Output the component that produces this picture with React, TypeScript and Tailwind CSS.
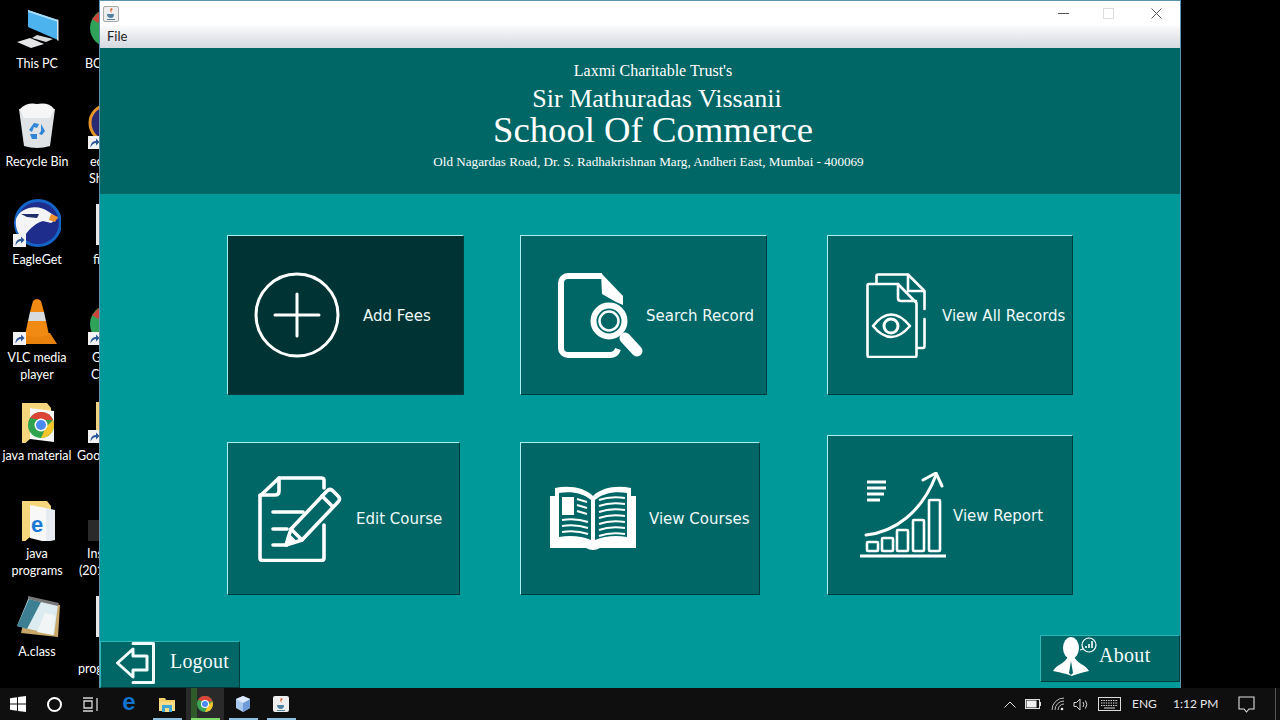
import React from 'react';

const W = 'white';
const TEAL = '#006666';

function Shortcut() {
  return (
    <svg viewBox="0 0 13 13" className="absolute left-0 bottom-0 w-[13px] h-[13px]">
      <rect width="13" height="13" fill="#f2f2f2" />
      <path d="M2.5 11.5 C2.5 7 5 5 8 5 V2.5 L11.5 6 L8 9.5 V7 C6 7 4.5 8 2.5 11.5Z" fill="#2b5797" />
    </svg>
  );
}

function ThisPc() {
  return (
    <svg viewBox="0 0 48 48" className="w-[48px] h-[48px]">
      <path d="M15 7 L45 17 V37 L15 24Z" fill="#4db3ee" />
      <path d="M15 7 L45 17 V19 L15 9Z" fill="#a8def8" />
      <path d="M44 16.5 L45.5 17 V38 L44 37Z" fill="#dde6ec" />
      <path d="M24 32 L40 36 L33 39 L19 35Z" fill="#d8dcdf" />
      <path d="M4 39 L17 35 L31 41 L18 45Z" fill="#e4e6e8" />
    </svg>
  );
}

function RecycleBin() {
  return (
    <svg viewBox="0 0 48 48" className="w-[48px] h-[48px]">
      <path d="M6 8 L42 8 L37 45 Q24 49 11 45Z" fill="#dfe3e6" />
      <path d="M7 8 Q14 1 24 3 Q36 1 41 8 L37 17 H11Z" fill="#f6f6f6" />
      <path d="M16 29 L21 22 L26 23 L24 27 L21 26 L19 31Z M28 23 L32 30 L29 34 L26 33 L28 30Z M17 33 L24 33 L24 38 L19 38Z" fill="#2f86d6" />
    </svg>
  );
}

function EagleGet() {
  return (
    <div className="relative w-[48px] h-[48px]">
      <svg viewBox="0 0 48 48" className="w-[48px] h-[48px]">
        <circle cx="25" cy="24" r="24" fill="#1464c8" />
        <circle cx="25" cy="24" r="21" fill="#1e2c8c" />
        <path d="M3 20 C8 7 26 5 36 13 L45 19 L38 24 L30 22 C22 24 14 32 10 40 C4 34 2 27 3 20Z" fill="#f4f4f6" />
        <path d="M38 15 L45 18 L42 23 L36 21Z" fill="#f0922b" />
        <path d="M8 15 L26 15 L24 19 L14 18Z" fill="#1e2c6c" />
      </svg>
      <Shortcut />
    </div>
  );
}

function Vlc() {
  return (
    <div className="relative w-[48px] h-[48px]">
      <svg viewBox="0 0 48 48" className="w-[48px] h-[48px]">
        <path d="M6 47 L11 36 H37 L44 47Z" fill="#e8820c" />
        <path d="M20 4 Q24 0 28 4 L31 15 H17Z" fill="#f08a12" />
        <path d="M17 15 H31 L33 24 H15Z" fill="#d8dbde" />
        <path d="M15 24 H33 L36 38 Q24 42 12 38Z" fill="#f08a12" />
      </svg>
      <Shortcut />
    </div>
  );
}

function ChromeFolder() {
  return (
    <svg viewBox="0 -7 48 48" className="w-[48px] h-[48px]">
      <path d="M9 1 H34 L38 6 V37 L17 37 L9 44Z" fill="#f6d67c" />
      <path d="M17 6 L41 9 V40 L17 37Z" fill="#f8f8f8" />
      <circle cx="28" cy="23" r="13" fill="#2fa34f" />
      <path d="M17 16 A13 13 0 0 1 40 18 H28Z" fill="#dc4437" />
      <path d="M40 18 A13 13 0 0 1 28 36 L33 25Z" fill="#f7c52c" />
      <circle cx="28" cy="23" r="6.5" fill="white" />
      <circle cx="28" cy="23" r="5" fill="#4a8af0" />
    </svg>
  );
}

function IeFolder() {
  return (
    <svg viewBox="0 -7 48 48" className="w-[48px] h-[48px]">
      <path d="M9 1 H34 L38 6 V37 L17 37 L9 44Z" fill="#f6d67c" />
      <path d="M17 5 L33 8 V42 L17 38Z" fill="#f8f8f8" />
      <path d="M33 8 L42 10 V40 L33 42Z" fill="#e6ecf2" />
      <text x="18" y="32" fontSize="22" fontWeight="700" fill="#1a78d4" fontFamily="'Liberation Sans', sans-serif">e</text>
    </svg>
  );
}

function Notepad() {
  return (
    <svg viewBox="0 -4 48 48" className="w-[48px] h-[48px]">
      <path d="M16 2 L47 10 L45 42 L8 38Z" fill="#c8a86a" />
      <path d="M16 2 L45 9 L41 40 L4 31Z" fill="#dcecf0" />
      <path d="M16 4 L28 7 L14 34 L4 31Z" fill="#3d7f92" />
      <path d="M32 18 L42 20 L40 40 L24 37Z" fill="#f2f5f6" />
      <path d="M15 1 L46 8 L45 11 L15 4Z" fill="#777" />
    </svg>
  );
}

function DesktopItem({ icon, lines }: { icon: React.ReactNode; lines: string[] }) {
  return (
    <div className="h-[98px] flex flex-col items-center">
      {icon}
      <div className="mt-[4px] text-center text-[12.5px] leading-[17px] text-white whitespace-nowrap">
        {lines.map((l) => <div key={l}>{l}</div>)}
      </div>
    </div>
  );
}

// second desktop column, almost fully hidden behind the app window
function PeekItem({ art, labels }: { art: React.ReactNode; labels: [string, string][] }) {
  return (
    <div className="h-[98px] flex flex-col">
      <div className="relative w-[48px] h-[48px] ml-[12px]">{art}</div>
      <div className="mt-[4px] text-[12.5px] leading-[17px] text-white whitespace-nowrap">
        {labels.map(([text, cls]) => <div key={text} className={cls}>{text || '\u00a0'}</div>)}
      </div>
    </div>
  );
}

function PeekSvg({ children }: { children: React.ReactNode }) {
  return <svg viewBox="0 0 48 48" className="w-[48px] h-[48px]">{children}</svg>;
}

function Card({ icon, label, className, gap }: { icon: React.ReactNode; label: string; className: string; gap: string }) {
  return (
    <div className={`flex items-center border-t border-l border-t-[#a9f0f0] border-l-[#a9f0f0] border-b border-r border-b-[#003c3c] border-r-[#003c3c] text-[15px] text-[#eef9f9] whitespace-nowrap ${className}`}>
      {icon}
      <span className={`pt-[2px] ${gap}`}>{label}</span>
    </div>
  );
}

function PlusIcon() {
  return (
    <svg viewBox="0 0 86 86" className="w-[86px] h-[86px] shrink-0" fill="none" stroke={W} strokeLinecap="round">
      <circle cx="43" cy="43" r="41" strokeWidth="3" />
      <path d="M43 22 V64 M21 43 H65" strokeWidth="3" />
    </svg>
  );
}

function SearchDocIcon() {
  return (
    <svg viewBox="0 0 86 85" className="w-[86px] h-[85px] shrink-0" fill="none" stroke={W}>
      <path d="M44 3 H10 A7 7 0 0 0 3 10 V75 A7 7 0 0 0 10 82 H52 Q58 82 60 76" strokeWidth="6" />
      <path d="M43 0 L65 23 V32 L58 29 L44 21Z" fill={W} stroke="none" />
      <circle cx="51" cy="48" r="15.5" strokeWidth="6" fill={TEAL} />
      <circle cx="51" cy="48" r="9.5" strokeWidth="2.5" />
      <path d="M67 65 L79 78" strokeWidth="11" strokeLinecap="round" />
    </svg>
  );
}

function EyeDocsIcon() {
  return (
    <svg viewBox="0 0 60 85" className="w-[60px] h-[85px] shrink-0" fill="none" stroke={W} strokeWidth="2.6" strokeLinejoin="round" strokeLinecap="round">
      <path d="M10.5 10 V3 Q10.5 1.5 12 1.5 H42 L58.5 18 V36 M58.5 46 V73 Q58.5 75 57 75 H51" />
      <path d="M42 2 V18 H58" />
      <path d="M3 11 H32 L50.5 30 V82 Q50.5 84 49 84 H3 Q1.5 84 1.5 82 V12.5 Q1.5 11 3 11Z" />
      <path d="M32 11 V25 Q32 28 35 28 H50" />
      <path d="M7 53 Q25 30 44 53 Q25 75 7 53Z" />
      <circle cx="25" cy="53" r="7" strokeWidth="3" />
    </svg>
  );
}

function EditDocIcon() {
  return (
    <svg viewBox="0 0 84 86" className="w-[84px] h-[86px] shrink-0" fill="none" stroke={W} strokeWidth="3.6" strokeLinecap="round" strokeLinejoin="round">
      <path d="M66 12 V4 Q66 2 63 2 H21 L2 20 V82 Q2 84.5 5 84.5 H63 Q66 84.5 66 82 V49" />
      <path d="M21 2 V15 Q21 19 17 19 H2" />
      <path d="M15 36 H45 M15 53 H29 M15 69 H29" />
      <path d="M28 69 L33 53 L69 15 Q72 12 75 15 L80 20 Q83 23 80 26 L44 64Z" fill={TEAL} />
      <path d="M64 20 L75 31 M33 53 L44 64" />
      <path d="M29 68 L31 60 L37 66Z" fill={W} />
    </svg>
  );
}

function BookIcon() {
  const left = [34, 40, 46];
  const right = [12, 18, 24, 30, 36, 42, 48];
  return (
    <svg viewBox="0 0 86 65" className="w-[86px] h-[65px] shrink-0" fill="none">
      <path d="M5 2 C20 -1 35 2 43 10 C51 2 66 -1 81 2 V10 H86 V62 H50 Q43 66 36 62 H0 V10 H5Z" fill={W} />
      <path d="M9 7 C21 5 33 7 41 14 V54 C32 50 20 49 9 51Z" fill={TEAL} />
      <path d="M77 7 C65 5 53 7 45 14 V54 C54 50 66 49 77 51Z" fill={TEAL} />
      <rect x="12" y="11" width="12" height="18" fill={W} />
      <path d="M27 13 L37 16 M27 19 L37 22 M27 25 L37 28" stroke={W} strokeWidth="2" />
      {left.map((y) => <path key={y} d={`M12 ${y} Q26 ${y - 2} 38 ${y + 2}`} stroke={W} strokeWidth="2" />)}
      {right.map((y) => <path key={y} d={`M49 ${y + 2} Q60 ${y - 2} 75 ${y}`} stroke={W} strokeWidth="2" />)}
      <path d="M43 12 V40" stroke={W} strokeWidth="3" />
      <path d="M43 40 V60" stroke={W} strokeWidth="1" />
    </svg>
  );
}

function ReportIcon() {
  const bars = [[7, 70, 11, 9], [22, 66, 11, 13], [37, 58, 11, 21], [53, 48, 11, 31], [69, 28, 11, 51]];
  return (
    <svg viewBox="0 0 86 86" className="w-[86px] h-[86px] shrink-0" fill="none" stroke={W} strokeWidth="2.6">
      <path d="M0 84 H86" strokeWidth="3" />
      {bars.map(([x, y, w, h]) => <rect key={x} x={x} y={y} width={w} height={h} rx="1" />)}
      <path d="M6 63 C35 60 62 40 76 3" strokeWidth="3" strokeLinecap="round" />
      <path d="M63 8 L76 1 L82 14" strokeWidth="3" strokeLinecap="round" />
      <path d="M7 10 H26 M7 16 H26 M7 22 H24 M7 28 H20" strokeWidth="3" />
    </svg>
  );
}

function LogoutIcon() {
  return (
    <svg viewBox="0 0 40 42" className="w-[40px] h-[42px] shrink-0" fill="none" stroke="#f2fbfb" strokeWidth="3" strokeLinejoin="round" strokeLinecap="round">
      <path d="M17 1.5 H37.5 V40.5 H17" />
      <path d="M1.5 21 L17 7 V14 H31 V28 H17 V35Z" />
    </svg>
  );
}

function AboutIcon() {
  return (
    <svg viewBox="0 0 48 40" className="w-[48px] h-[40px] shrink-0">
      <ellipse cx="18" cy="11" rx="8" ry="11" fill={W} />
      <path d="M0 34 C4 27 12 27 15 19 H21 C24 27 32 27 36 34 C30 35 24 37 19 39 C14 37 6 35 0 34Z" fill={W} />
      <path d="M18 24 L16 36 L18 38 L20 36Z" fill={TEAL} />
      <circle cx="36" cy="8" r="7" fill={TEAL} stroke={W} strokeWidth="1.2" />
      <path d="M27 13 L30 12" stroke={W} strokeWidth="1.2" />
      <path d="M33 11 V9 M36 11 V7 M39 11 V4" stroke={W} strokeWidth="1.6" />
    </svg>
  );
}

function TaskSlot({ children, className = 'w-[38px]' }: { children: React.ReactNode; className?: string }) {
  return <div className={`relative h-full flex items-center justify-center ${className}`}>{children}</div>;
}

function Taskbar() {
  return (
    <div className="absolute left-0 bottom-0 w-[1280px] h-[32px] bg-[#0f0f0f] flex items-center text-[#e6e6e6] text-[12px]">
      <TaskSlot className="w-[36px]">
        <svg viewBox="0 0 16 16" className="w-[16px] h-[16px]" fill="white">
          <path d="M0 2.3 L7 1.3 V7.6 H0Z M8 1.1 L16 0 V7.6 H8Z M0 8.4 H7 V14.7 L0 13.7Z M8 8.4 H16 V16 L8 14.9Z" />
        </svg>
      </TaskSlot>
      <TaskSlot className="w-[36px]">
        <div className="w-[15px] h-[15px] rounded-full border-2 border-white" />
      </TaskSlot>
      <TaskSlot className="w-[36px]">
        <svg viewBox="0 0 17 15" className="w-[17px] h-[15px]" fill="none" stroke="#d8d8d8" strokeWidth="1.3">
          <path d="M1 1 H11 M1 14 H11 M2 4 H10 V11 H2Z M15 1 V14" />
        </svg>
      </TaskSlot>
      <TaskSlot className="w-[38px] ml-[2px]">
        <span className="text-[24px] leading-none font-bold text-[#1272d0] font-['Liberation_Sans',sans-serif] -mt-[4px]">e</span>
      </TaskSlot>
      <TaskSlot>
        <svg viewBox="0 0 16 15" className="w-[16px] h-[15px]">
          <path d="M0 1 H6 L7 3 H16 V14 H0Z" fill="#f4cf6a" />
          <path d="M0 5 H16 V14 H0Z" fill="#f8dc88" />
          <rect x="3" y="8" width="10" height="7" fill="#3fa7d8" />
          <rect x="6" y="11" width="4" height="4" fill="#f8dc88" />
        </svg>
        <div className="absolute left-[5px] right-[4px] bottom-0 h-[2px] bg-[#8fc0e0]" />
      </TaskSlot>
      <TaskSlot className="w-[38px] bg-[#2a2a2a]">
        <div className="absolute left-[5px] top-0 bottom-0 w-[6px] bg-[#2f5a2a]" />
        <svg viewBox="0 0 16 16" className="relative w-[16px] h-[16px]">
          <circle cx="8" cy="8" r="8" fill="#3aa655" />
          <path d="M1 4 A8 8 0 0 1 15.5 5.5 H8Z" fill="#dc4437" />
          <path d="M15.5 5.5 A8 8 0 0 1 8 16 L11 9Z" fill="#f7c52c" />
          <circle cx="8" cy="8" r="4" fill="white" />
          <circle cx="8" cy="8" r="3" fill="#4a8af0" />
        </svg>
        <div className="absolute left-[5px] right-[4px] bottom-0 h-[2px] bg-[#7fdc6a]" />
      </TaskSlot>
      <TaskSlot>
        <svg viewBox="0 0 16 16" className="w-[16px] h-[16px]">
          <path d="M8 0 L15 3 V12 L8 16 L1 12 V3Z" fill="#a9c8ee" />
          <path d="M8 7 L15 3 V12 L8 16Z" fill="#6f9bd8" />
          <path d="M1 3 L8 0 L15 3 L8 7Z" fill="#dbe9fa" />
        </svg>
        <div className="absolute left-[5px] right-[4px] bottom-0 h-[2px] bg-[#8fc0e0]" />
      </TaskSlot>
      <TaskSlot>
        <svg viewBox="0 0 16 16" className="w-[16px] h-[16px]">
          <rect width="16" height="16" rx="2" fill="#eeeeee" />
          <path d="M8 2 Q6 5 9 7 Q7 5 10 3Z" fill="#d9622b" />
          <path d="M4 9 H11 Q11 13 8 13 Q4 13 4 9Z M4 14 H12 V15 H4Z" fill="#5382a1" />
        </svg>
        <div className="absolute left-[5px] right-[4px] bottom-0 h-[2px] bg-[#8fc0e0]" />
      </TaskSlot>

      <div className="ml-auto flex items-center h-full">
        <svg viewBox="0 0 12 7" className="w-[12px] h-[7px] mr-[9px]" fill="none" stroke="#e0e0e0" strokeWidth="1">
          <path d="M0.5 6.5 L6 1 L11.5 6.5" />
        </svg>
        <svg viewBox="0 0 16 10" className="w-[16px] h-[10px] mr-[10px]">
          <rect x="0.5" y="0.5" width="14" height="9" fill="none" stroke="#ddd" />
          <rect x="1.5" y="1.5" width="10" height="7" fill="#eee" />
          <rect x="15" y="3" width="1" height="4" fill="#ddd" />
        </svg>
        <svg viewBox="0 0 14 14" className="w-[14px] h-[14px] mr-[8px]" fill="none" stroke="#bdbdbd">
          <path d="M1 13 A12 12 0 0 1 13 1 M4 13 A9 9 0 0 1 13 4 M7 13 A6 6 0 0 1 13 7" />
          <circle cx="11" cy="12" r="1.3" fill="#eee" stroke="none" />
        </svg>
        <svg viewBox="0 0 16 13" className="w-[16px] h-[13px] mr-[9px]" fill="none" stroke="#d8d8d8">
          <path d="M1 4.5 H3.5 L7 1 V12 L3.5 8.5 H1Z M10 4 Q11.5 6.5 10 9 M12.5 2.5 Q15 6.5 12.5 10.5" />
        </svg>
        <svg viewBox="0 0 23 14" className="w-[23px] h-[14px] mr-[11px]" fill="none" stroke="#dcdcdc">
          <rect x="0.5" y="0.5" width="22" height="13" />
          <path d="M3 3.5 H20 M3 6 H20 M3 8.5 H20" strokeDasharray="1.4 1" />
          <path d="M6 11 H17" />
        </svg>
        <span className="w-[22px] mr-[19px]">ENG</span>
        <span className="w-[42px] mr-[23px] whitespace-nowrap">1:12 PM</span>
        <svg viewBox="0 0 17 17" className="w-[17px] h-[17px] mr-[20px]" fill="none" stroke="#e0e0e0" strokeWidth="1.1">
          <path d="M1 1 H16 V13 H11 L8.5 16 L6 13 H1Z" />
        </svg>
        <div className="w-[1px] h-full bg-[#555] mr-[4px]" />
      </div>
    </div>
  );
}

export default function App() {
  return (
    <div className="relative w-[1280px] h-[720px] overflow-hidden bg-black font-['Lato',sans-serif]">
      {/* desktop icons */}
      <div className="absolute left-0 top-[3px] w-[74px] flex flex-col">
        <DesktopItem icon={<ThisPc />} lines={['This PC']} />
        <DesktopItem icon={<RecycleBin />} lines={['Recycle Bin']} />
        <DesktopItem icon={<EagleGet />} lines={['EagleGet']} />
        <DesktopItem icon={<Vlc />} lines={['VLC media', 'player']} />
        <DesktopItem icon={<ChromeFolder />} lines={['java material']} />
        <DesktopItem icon={<IeFolder />} lines={['java', 'programs']} />
        <DesktopItem icon={<Notepad />} lines={['A.class']} />
      </div>
      <div className="absolute left-[76px] top-[3px] w-[30px] flex flex-col">
        <PeekItem
          labels={[['BC', 'pl-[9px]']]}
          art={<PeekSvg><circle cx="21" cy="25" r="19" fill="#2fa35a" /><path d="M4 16 L12 8 L16 10 L10 20Z" fill="#c8473c" /></PeekSvg>}
        />
        <PeekItem
          labels={[['ed', 'pl-[14px]'], ['Sh', 'pl-[13px]']]}
          art={<><PeekSvg><circle cx="20" cy="22" r="18" fill="#2a2a72" stroke="#e8962a" strokeWidth="3" /></PeekSvg><Shortcut /></>}
        />
        <PeekItem
          labels={[['fi', 'pl-[17px]']]}
          art={<PeekSvg><rect x="8" y="5" width="4" height="41" fill="#e8e8e8" /></PeekSvg>}
        />
        <PeekItem
          labels={[['G', 'pl-[16px]'], ['C', 'pl-[15px]']]}
          art={<><PeekSvg><circle cx="21" cy="27" r="19" fill="#2fa35a" /><path d="M4 18 L12 10 L16 12 L10 22Z" fill="#c8473c" /></PeekSvg><Shortcut /></>}
        />
        <PeekItem
          labels={[['Goo', 'pl-[1px]']]}
          art={<><PeekSvg><rect x="8" y="7" width="4" height="30" fill="#f0d280" /></PeekSvg><Shortcut /></>}
        />
        <PeekItem
          labels={[['Ins', 'pl-[11px]'], ['(201', 'pl-[3px]']]}
          art={<PeekSvg><rect y="27" width="12" height="22" fill="#2a2a2a" /></PeekSvg>}
        />
        <PeekItem
          labels={[['', ''], ['prog', 'pl-[2px]']]}
          art={<PeekSvg><rect x="8" y="5" width="4" height="41" fill="#e8e8e8" /></PeekSvg>}
        />
      </div>

      {/* app window */}
      <div className="absolute left-[99px] top-0 w-[1082px] h-[688px] flex flex-col border border-[#5e93ad] border-b-0">
        <div className="h-[25px] bg-white flex items-center shrink-0">
          <div className="ml-[3px] w-[16px] h-[16px] rounded-[2px] border border-[#a8a8a8] bg-[#eeeeee] flex items-center justify-center">
            <svg viewBox="0 0 12 12" className="w-[12px] h-[12px]">
              <path d="M6 0 Q4 3 7 5 Q5 3 8 1Z" fill="#d9622b" />
              <path d="M2 6 H9 Q9 10 6 10 Q2 10 2 6Z M2 11 H10 V12 H2Z" fill="#5382a1" />
            </svg>
          </div>
          <div className="ml-auto flex items-center">
            <svg viewBox="0 0 11 1" className="w-[11px] h-[1px] mr-[34px]"><rect width="11" height="1" fill="#555" /></svg>
            <svg viewBox="0 0 11 11" className="w-[11px] h-[11px] mr-[37px]" fill="none" stroke="#dddddd"><rect x="0.5" y="0.5" width="10" height="10" /></svg>
            <svg viewBox="0 0 11 11" className="w-[11px] h-[11px] mr-[18px]" fill="none" stroke="#555"><path d="M0.5 0.5 L10.5 10.5 M10.5 0.5 L0.5 10.5" /></svg>
          </div>
        </div>
        <div className="h-[22px] bg-gradient-to-b from-[#fafafa] to-[#d4d8e0] flex items-center pl-[7px] text-[13px] text-[#222] shrink-0">
          File
        </div>

        <div className="h-[146px] bg-[#006666] shrink-0 flex flex-col items-center pl-[26px] pt-[13px] text-white font-['Liberation_Serif',serif]">
          <div className="text-[16px] leading-[20px]">Laxmi Charitable Trust's</div>
          <div className="text-[26px] leading-[30px] mt-[3px] ml-[8px]">Sir Mathuradas Vissanii</div>
          <div className="text-[36.7px] leading-[36px] mt-[-2px]">School Of Commerce</div>
          <div className="text-[13.15px] leading-[16px] mt-[6px] mr-[9px]">Old Nagardas Road, Dr. S. Radhakrishnan Marg, Andheri East, Mumbai - 400069</div>
        </div>

        <div className="flex-1 bg-[#009999] flex flex-col pt-[41px] font-['DejaVu_Sans',sans-serif]">
          <div className="flex ml-[127px] h-[160px]">
            <Card className="w-[237px] bg-[#003333] pl-[26px]" gap="ml-[23px]" icon={<PlusIcon />} label="Add Fees" />
            <Card className="w-[247px] ml-[56px] bg-[#006666] pl-[37px]" gap="ml-[2px]" icon={<SearchDocIcon />} label="Search Record" />
            <Card className="w-[246px] ml-[60px] bg-[#006666] pl-[38px]" gap="ml-[16px]" icon={<EyeDocsIcon />} label="View All Records" />
          </div>
          <div className="flex items-end ml-[127px] h-[160px] mt-[40px]">
            <Card className="w-[233px] h-[153px] bg-[#006666] pl-[30px]" gap="ml-[14px]" icon={<EditDocIcon />} label="Edit Course" />
            <Card className="w-[240px] h-[153px] ml-[60px] bg-[#006666] pl-[29px]" gap="ml-[13px]" icon={<BookIcon />} label="View Courses" />
            <Card className="w-[246px] h-[160px] ml-[67px] bg-[#006666] pl-[32px]" gap="ml-[7px]" icon={<ReportIcon />} label="View Report" />
          </div>

          <div className="mt-auto flex justify-between items-end text-[20px] text-[#f2fbfb] font-['Liberation_Serif',serif]">
            <div className="w-[140px] h-[47px] flex items-center pl-[15px] pb-[4px] bg-[#006666] border-t border-l border-t-[#2fb5b5] border-l-[#2fb5b5] border-b border-r border-b-[#003c3c] border-r-[#003c3c]">
              <LogoutIcon />
              <span className="ml-[14px] -mt-[4px] tracking-[0.2px]">Logout</span>
            </div>
            <div className="w-[140px] h-[47px] mb-[6px] flex items-center pl-[12px] pb-[4px] bg-[#006666] border-t border-l border-t-[#2fb5b5] border-l-[#2fb5b5] border-b border-r border-b-[#003c3c] border-r-[#003c3c]">
              <AboutIcon />
              <span className="ml-[-2px] -mt-[4px] tracking-[0.3px]">About</span>
            </div>
          </div>
        </div>
      </div>

      <Taskbar />
    </div>
  );
}
